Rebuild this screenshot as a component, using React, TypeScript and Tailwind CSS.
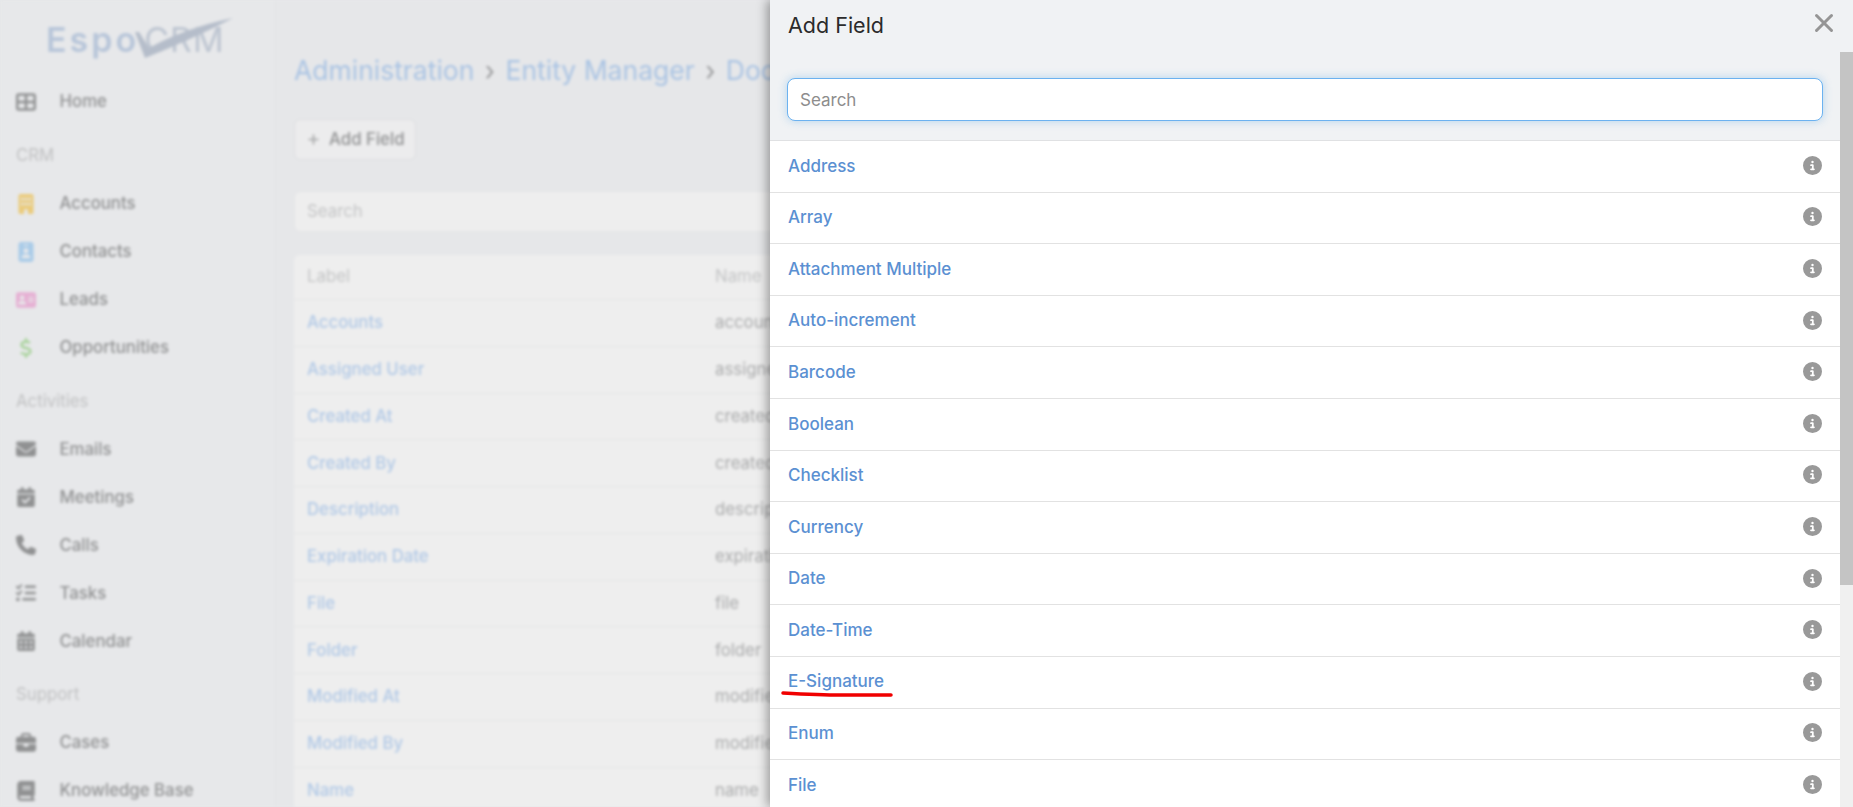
import { X } from 'lucide-react'
import {
  FaAddressCard,
  FaBook,
  FaBriefcase,
  FaBuilding,
  FaCalendarCheck,
  FaCalendarDays,
  FaCircleInfo,
  FaDollarSign,
  FaEnvelope,
  FaIdBadge,
  FaListCheck,
  FaPhone,
  FaPlus,
  FaTableCellsLarge,
} from 'react-icons/fa6'

const fieldTypes = [
  'Address',
  'Array',
  'Attachment Multiple',
  'Auto-increment',
  'Barcode',
  'Boolean',
  'Checklist',
  'Currency',
  'Date',
  'Date-Time',
  'E-Signature',
  'Enum',
  'File',
]

const fields = [
  ['Accounts', 'accounts'],
  ['Assigned User', 'assignedUser'],
  ['Created At', 'createdAt'],
  ['Created By', 'createdBy'],
  ['Description', 'description'],
  ['Expiration Date', 'expirationDate'],
  ['File', 'file'],
  ['Folder', 'folder'],
  ['Modified At', 'modifiedAt'],
  ['Modified By', 'modifiedBy'],
  ['Name', 'name'],
]

function NavItem({ icon, label }: { icon: React.ReactNode; label: string }) {
  return (
    <div className="flex h-12 shrink-0 items-center text-[16.8px] font-medium text-[#909192]">
      <span className="flex w-[59.5px] shrink-0 justify-start pl-4">
        <span className="flex w-5 justify-center">{icon}</span>
      </span>
      <span>{label}</span>
    </div>
  )
}

function NavGroup({ label }: { label: string }) {
  return (
    <div className="flex h-[53.6px] shrink-0 items-center pl-4 pt-[6px] text-[16.8px] text-[#c0c1c2]">
      {label}
    </div>
  )
}

function Sidebar() {
  return (
    <aside className="flex w-[276px] shrink-0 flex-col border-r border-[#e1e2e4] bg-[#e7e8ea]">
      <div className="relative h-[78px] shrink-0">
        <div className="absolute left-[46px] top-[19px] flex items-baseline text-[#b7c5d9]">
          <span className="text-[34px] leading-[42px] font-semibold tracking-[3px]">Espo</span>
          <span className="ml-[5px] text-[34px] leading-[42px] tracking-[1px] text-[#bcc4d0]">CRM</span>
        </div>
        <svg className="absolute left-[135px] top-[18px]" width="100" height="42" viewBox="0 0 100 42">
          <path d="M0 14 L4 14 L14 30 Q50 10 98 0 Q60 20 10 40 Z" fill="#b5bdca" />
        </svg>
      </div>
      <NavItem icon={<FaTableCellsLarge size={20} />} label="Home" />
      <NavGroup label="CRM" />
      <NavItem icon={<FaBuilding size={20} className="text-[#eacb7c]" />} label="Accounts" />
      <NavItem icon={<FaIdBadge size={20} className="text-[#a9cbe8]" />} label="Contacts" />
      <NavItem icon={<FaAddressCard size={20} className="text-[#e6afd3]" />} label="Leads" />
      <NavItem icon={<FaDollarSign size={20} className="text-[#a9d39c]" />} label="Opportunities" />
      <NavGroup label="Activities" />
      <NavItem icon={<FaEnvelope size={20} />} label="Emails" />
      <NavItem icon={<FaCalendarCheck size={20} />} label="Meetings" />
      <NavItem icon={<FaPhone size={20} />} label="Calls" />
      <NavItem icon={<FaListCheck size={20} />} label="Tasks" />
      <NavItem icon={<FaCalendarDays size={20} />} label="Calendar" />
      <NavGroup label="Support" />
      <NavItem icon={<FaBriefcase size={20} />} label="Cases" />
      <NavItem icon={<FaBook size={20} />} label="Knowledge Base" />
    </aside>
  )
}

function Content() {
  return (
    <main className="flex min-w-0 flex-1 flex-col bg-[#e6e7e9] pl-[18px] pr-4">
      <h1 className="mt-[52px] h-[36px] shrink-0 whitespace-nowrap text-[26.5px] leading-[36px] text-[#a9c3e3]">
        Administration <span className="mx-[3px] text-[#9a9b9d]">›</span> Entity Manager{' '}
        <span className="mx-[3px] text-[#9a9b9d]">›</span> Documents
      </h1>
      <button className="mt-[31px] flex h-[41px] w-[122px] shrink-0 items-center gap-[9px] rounded-md border border-[#dcdde0] bg-[#ececed] pl-[12px] text-[16.8px] font-medium text-[#909192]">
        <FaPlus size={13} className="text-[#a5a6a7]" />
        Add Field
      </button>
      <div className="mt-[31px] flex h-[41px] shrink-0 items-center rounded-md border border-[#e4e5e7] bg-[#eeeeee] pl-3 text-[16.8px] text-[#c3c4c5]">
        Search
      </div>
      <div className="mt-[23px] shrink-0 rounded-md bg-[#eeeeee]">
        <div className="flex h-[45px] items-center border-b border-[#e4e5e7] text-[16.8px] text-[#c3c4c5]">
          <span className="w-[421px] pl-[13px]">Label</span>
          <span>Name</span>
        </div>
        {fields.map(([label, name]) => (
          <div key={name} className="flex h-[46.75px] items-center border-b border-[#e4e5e7] text-[16.8px]">
            <span className="w-[421px] pl-[13px] font-medium text-[#b0c8e6]">{label}</span>
            <span className="text-[#a9aaab]">{name}</span>
          </div>
        ))}
      </div>
    </main>
  )
}

function AddFieldModal() {
  return (
    <div className="absolute inset-y-0 left-[770px] right-0 flex flex-col overflow-hidden bg-white shadow-[-3px_0_10px_rgba(0,0,0,0.35)]">
      <div className="shrink-0 border-b border-[#e0e1e3] bg-[#f0f2f4]">
        <div className="flex h-[52px] items-center justify-between pl-[18px] pr-[14px]">
          <h2 className="text-[21.5px] leading-none text-[#2b2b2b]">Add Field</h2>
          <X size={30} strokeWidth={2.4} className="-mt-[6px] text-[#959595]" />
        </div>
        <div className="pb-[19px] pl-[17px] pr-[30px] pt-[26px]">
          <input
            placeholder="Search"
            className="block h-[43px] w-full rounded-lg border border-[#6cb2f0] bg-white px-3 text-[17px] text-[#333] shadow-[0_0_8px_rgba(102,175,233,0.45)] outline-none placeholder:text-[#8d8d8d]"
          />
        </div>
      </div>
      <div className="pr-[13px]">
        {fieldTypes.map((name) => (
          <div
            key={name}
            className="relative flex h-[51.6px] items-center justify-between border-b border-[#e2e2e2] pl-[18px] pr-[18px] text-[17px] font-medium text-[#5b90d2]"
          >
            {name}
            <FaCircleInfo size={19} className="-mt-[2px] text-[#999999]" />
            {name === 'E-Signature' && (
              <svg className="absolute left-[11px] top-[33px]" width="112" height="8" viewBox="0 0 112 8">
                <path d="M2 3 Q40 5 60 5 T110 5" fill="none" stroke="#f00000" strokeWidth="3.5" strokeLinecap="round" />
              </svg>
            )}
          </div>
        ))}
      </div>
      <div className="absolute bottom-0 right-0 top-[52px] w-[13px] bg-[#f0f0f0]">
        <div className="h-[533px] bg-[#c4c4c4]" />
      </div>
    </div>
  )
}

export default function App() {
  return (
    <div className="relative h-screen overflow-hidden bg-[#e6e7e9] font-['Inter',sans-serif]">
      <div className="flex h-full overflow-hidden blur-[1.6px]">
        <Sidebar />
        <Content />
      </div>
      <AddFieldModal />
    </div>
  )
}
